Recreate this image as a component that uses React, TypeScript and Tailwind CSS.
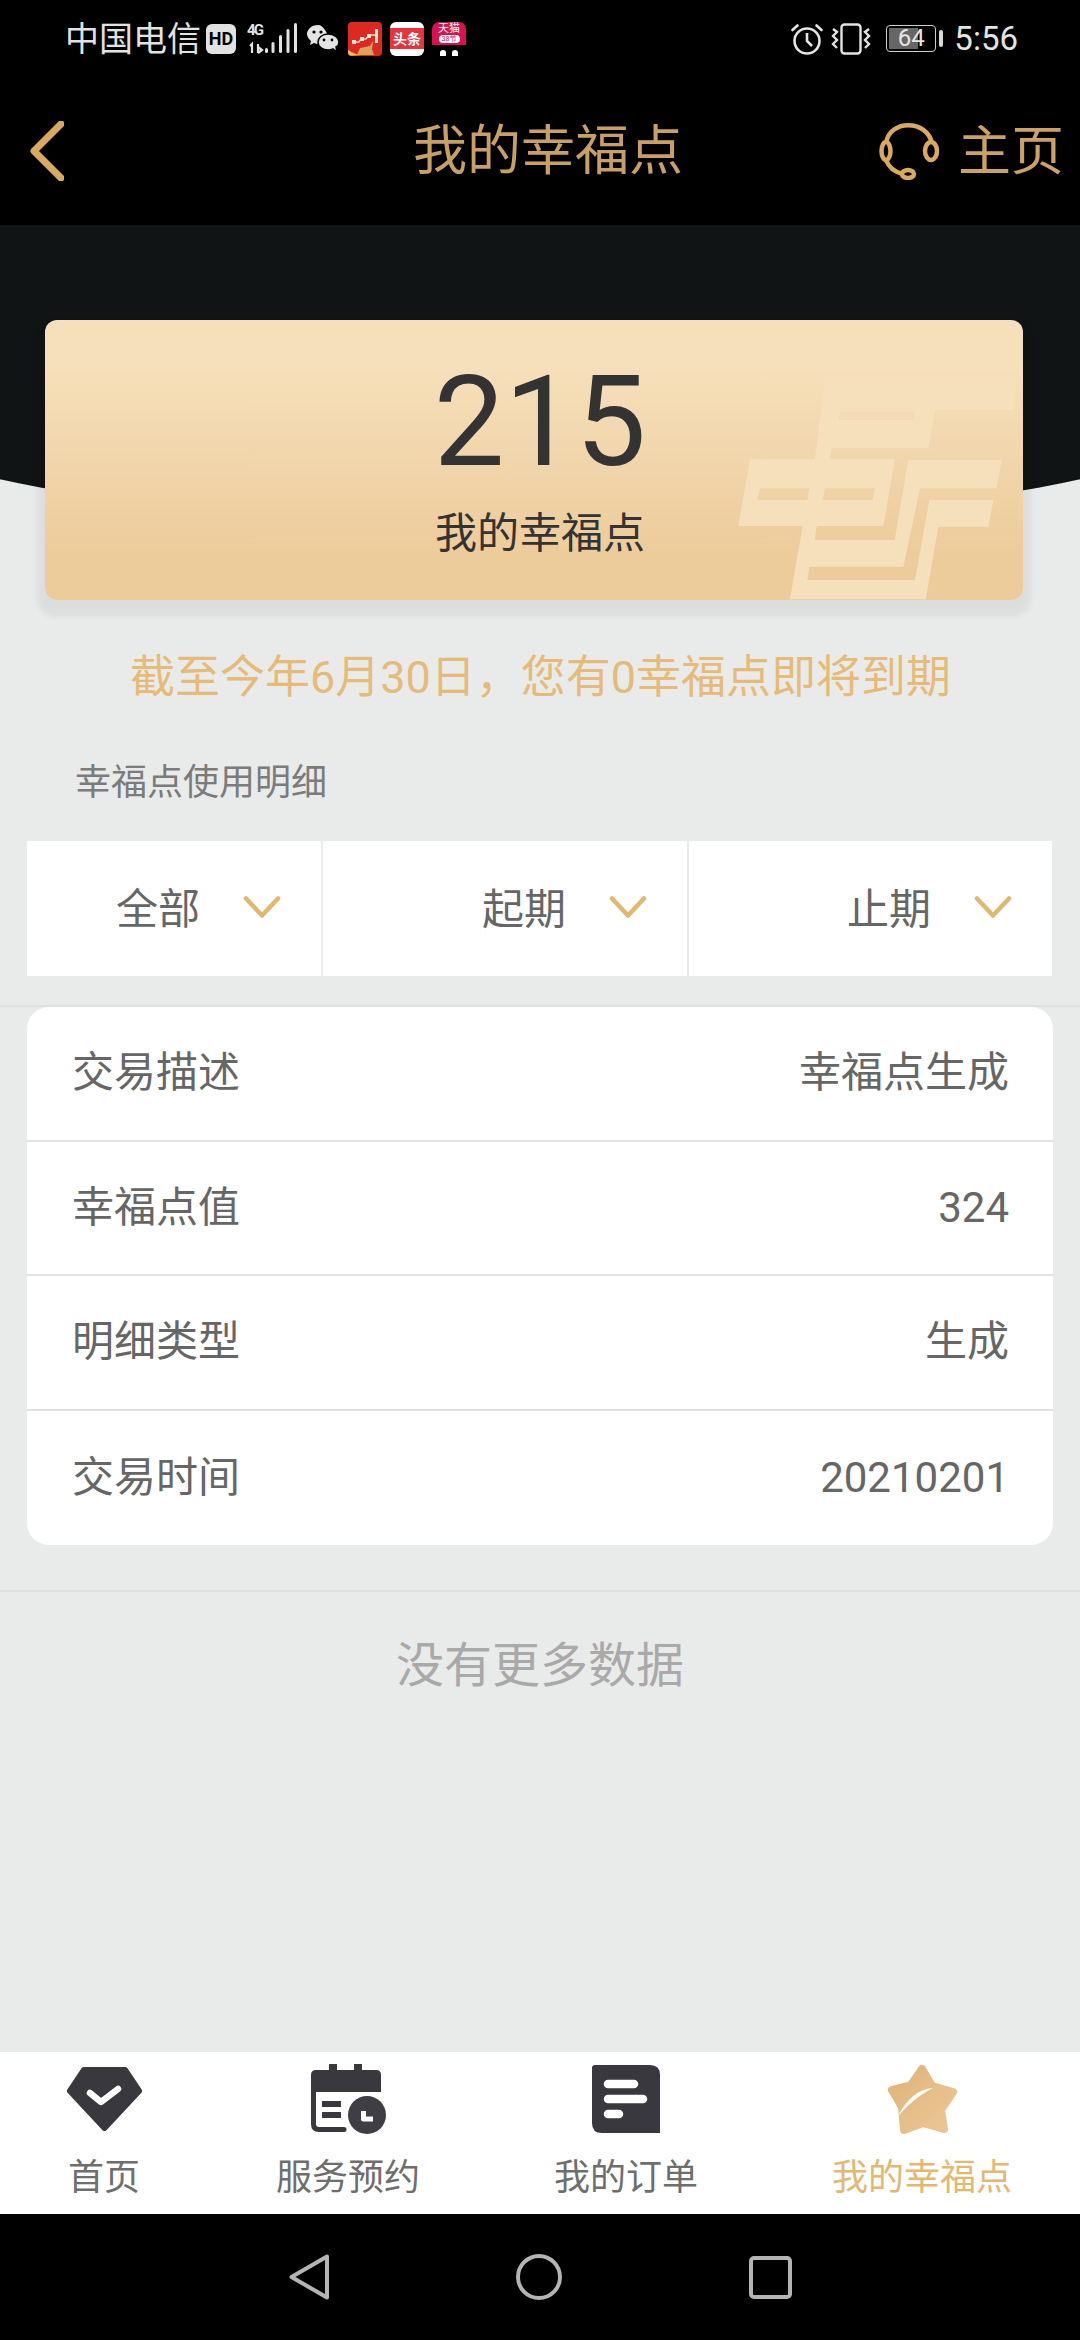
import React from 'react';

const BackIcon = () => (
  <svg width="34" height="60" viewBox="0 0 34 60" fill="none">
    <path d="M31 3 L4 30 L31 57" stroke="#d9aa5e" strokeWidth="7" strokeLinecap="round" strokeLinejoin="round" />
  </svg>
);

const HeadsetIcon = () => (
  <svg width="60" height="58" viewBox="0 0 60 58" fill="none" stroke="#d8a95f" strokeWidth="4.5">
    <path d="M7 22 C9 -3 49 -3 53 22" />
    <ellipse cx="7" cy="29" rx="4.5" ry="9" />
    <ellipse cx="52" cy="29" rx="6" ry="9" />
    <path d="M7 38 C10 46 15 50 24 52" />
    <ellipse cx="29" cy="52" rx="6" ry="4" />
  </svg>
);

const SignalIcon = () => (
  <svg width="52" height="34" viewBox="0 0 52 34">
    <text x="0" y="13" fontSize="15" fontWeight="700" fill="#e2e2e2" fontFamily="Roboto, sans-serif" textLength="17">4G</text>
    <path d="M3 24 L5 22 V31 M11 22 V31 M11 25 L15 28 L11 31" stroke="#e2e2e2" strokeWidth="2.2" fill="none" />
    <rect x="18" y="26" width="3" height="5" rx="1.5" fill="#e2e2e2" />
    <rect x="24.5" y="20" width="3" height="11" rx="1.5" fill="#e2e2e2" />
    <rect x="32" y="13" width="3" height="18" rx="1.5" fill="#e2e2e2" />
    <rect x="39.5" y="7" width="3" height="24" rx="1.5" fill="#e2e2e2" />
    <rect x="47" y="1" width="3" height="30" rx="1.5" fill="#e2e2e2" />
  </svg>
);

const WechatIcon = () => (
  <svg width="32" height="30" viewBox="0 0 32 30">
    <path d="M11 1 C4 1 0 6 0 10 C0 13 2 15 4 17 L3 21 L7 19 C9 20 11 20 13 20 C21 20 22 10 18 6 C16 3 14 1 11 1Z" fill="#e4e4e4" />
    <path d="M21 10 C15 10 11 14 11 18 C11 23 16 26 21 26 C23 26 24 26 26 25 L30 28 L29 23 C31 22 32 20 32 18 C32 14 27 10 21 10Z" fill="#e4e4e4" stroke="#000" strokeWidth="1.5" />
    <circle cx="7" cy="8" r="1.6" fill="#000" />
    <circle cx="14" cy="8" r="1.6" fill="#000" />
    <circle cx="17" cy="16" r="1.4" fill="#000" />
    <circle cx="25" cy="16" r="1.4" fill="#000" />
  </svg>
);

const StockAppIcon = () => (
  <div className="w-[34px] h-[34px] rounded-[4px] bg-[#dc2a22] overflow-hidden">
    <svg width="34" height="34" viewBox="0 0 34 34">
      <path d="M5 20 H11 L13 17 H18 L21 13 H27" stroke="#f5d9c0" strokeWidth="1.4" fill="none" />
      <rect x="4" y="18" width="4" height="4" fill="#fbe4d0" />
      <rect x="12" y="15" width="4" height="4" fill="#fbe4d0" />
      <rect x="19" y="12" width="4" height="4" fill="#fbe4d0" />
      <rect x="27" y="7" width="3" height="14" fill="#fbe4d0" />
      <path d="M9 33 L12 26 L22 24 L25 19 L24 27 L26 33Z" fill="#d9a45c" />
      <path d="M0 28 Q8 33 13 33 L0 34Z" fill="#f0c04a" />
    </svg>
  </div>
);

const ToutiaoIcon = () => (
  <div className="w-[34px] h-[34px] rounded-[6px] bg-white flex flex-col justify-center overflow-hidden">
    <div className="h-[21px] bg-[#e8323c] flex items-center justify-center text-white text-[14px] leading-none font-bold whitespace-nowrap">头条</div>
  </div>
);

const TmallIcon = () => (
  <div className="w-[34px] h-[34px] relative overflow-hidden">
    <div className="h-[23px] rounded-t-[7px] bg-[#d9124f] flex flex-col items-center">
      <span className="text-[11px] leading-[13px] text-white whitespace-nowrap">天猫</span>
      <span className="h-[8px] w-[21px] rounded-full bg-white text-[#d9124f] text-[7px] leading-[8px] text-center">38节</span>
    </div>
    <div className="flex justify-center gap-[6px] mt-[5px]">
      <span className="w-[6px] h-[6px] rounded-t-full bg-white" />
      <span className="w-[6px] h-[6px] rounded-t-full bg-white" />
    </div>
  </div>
);

const AlarmIcon = () => (
  <svg width="32" height="32" viewBox="0 0 32 32" fill="none" stroke="#e4e4e4" strokeWidth="2.6">
    <circle cx="16" cy="18" r="12.5" />
    <path d="M16 10 V18 L21 23" />
    <path d="M1.5 7 L6.5 2.5 M30.5 7 L25.5 2.5" strokeLinecap="round" />
  </svg>
);

const VibrateIcon = () => (
  <svg width="40" height="32" viewBox="0 0 40 32" fill="none" stroke="#e4e4e4" strokeWidth="2.4">
    <rect x="10.5" y="1.5" width="19" height="29" rx="3" />
    <path d="M2 6 L6 9 L2 13 L6 17 L2 21 L6 25" />
    <path d="M38 6 L34 9 L38 13 L34 17 L38 21 L34 25" />
  </svg>
);

const DiamondIcon = () => (
  <svg width="75" height="64" viewBox="0 0 75 64">
    <path d="M17 3 H58 L72 24 L37.5 61 L3 24Z" fill="#38383e" stroke="#38383e" strokeWidth="6" strokeLinejoin="round" />
    <path d="M23 26 L34 35 L51 22" fill="none" stroke="#fff" strokeWidth="6.5" strokeLinecap="round" strokeLinejoin="round" />
  </svg>
);

const CalendarIcon = () => (
  <svg width="75" height="70" viewBox="0 0 75 70">
    <path d="M18 0 H26 V6 H43 V0 H51 V6 H65 Q70 6 70 11 V28 H0 V11 Q0 6 5 6 H18Z" fill="#38383e" />
    <path d="M2.5 28 V60 Q2.5 65.5 8 65.5 H33" fill="none" stroke="#38383e" strokeWidth="5" strokeLinecap="round" />
    <rect x="11" y="37" width="19" height="6" fill="#38383e" />
    <rect x="11" y="48" width="19" height="6" fill="#38383e" />
    <circle cx="56" cy="51" r="19" fill="#3e3e44" />
    <path d="M52.5 47 V55 H62" fill="none" stroke="#fff" strokeWidth="5" strokeLinejoin="round" />
  </svg>
);

const OrdersIcon = () => (
  <svg width="68" height="68" viewBox="0 0 68 68">
    <path d="M3 0 H58 Q68 0 68 10 V68 H10 Q0 68 0 58 V3 Q0 0 3 0Z" fill="#38383e" />
    <path d="M16 19 H42 M16 34 H51 M16 49 H27" stroke="#fff" strokeWidth="8.5" strokeLinecap="round" />
  </svg>
);

const StarIcon = () => (
  <svg width="71" height="70" viewBox="0 0 71 70">
    <defs>
      <linearGradient id="starFill" x1="0" y1="0" x2="1" y2="1">
        <stop offset="0" stopColor="#dfb478" />
        <stop offset="1" stopColor="#ebc797" />
      </linearGradient>
    </defs>
    <path d="M35 5 L45 22 L66 28 L54 46 L57 65 L36 59 L17 66 L15 43 L5 26 L24 21Z" fill="url(#starFill)" stroke="url(#starFill)" strokeWidth="8" strokeLinejoin="round" />
    <path d="M46 24 C32 25 20 34 11 52 C22 40 32 31 46 24Z" fill="#fff" />
  </svg>
);

const PostLogo = () => (
  <svg className="absolute left-[675px] top-[40px]" width="320" height="250" viewBox="0 0 960 750">
    <g fill="#f6e0bc" fillRule="evenodd">
      <path d="M315 55 H585 L600 50 H890 L880 150 H645 L625 265 H335 L330 298 H285Z M360 155 L355 180 H580 L585 155Z" />
      <path d="M90 298 H525 L490 498 H55Z M120 385 L112 420 H262 L268 385Z M315 385 L308 420 H458 L465 385Z" />
      <path d="M248 498 H290 L284 540 H524 L565 300 H845 L830 385 H600 L550 620 H268 L262 660 H585 L628 420 H820 L805 500 H655 L617 718 H210Z" />
    </g>
  </svg>
);

const Chevron = () => (
  <svg width="38" height="22" viewBox="0 0 38 22" fill="none">
    <path d="M3 2.5 L19 19.5 L35 2.5" stroke="#e2b76f" strokeWidth="4.5" strokeLinecap="round" strokeLinejoin="round" />
  </svg>
);

const filters = [
  { label: '全部', width: 'w-[294px]' },
  { label: '起期', width: 'w-[364px]' },
  { label: '止期', width: 'w-[363px]' },
];

const rows = [
  { label: '交易描述', value: '幸福点生成' },
  { label: '幸福点值', value: '324' },
  { label: '明细类型', value: '生成' },
  { label: '交易时间', value: '20210201' },
];

const tabs = [
  { label: '首页', icon: <DiamondIcon />, active: false },
  { label: '服务预约', icon: <CalendarIcon />, active: false },
  { label: '我的订单', icon: <OrdersIcon />, active: false },
  { label: '我的幸福点', icon: <StarIcon />, active: true },
];

export default function App() {
  return (
    <div className="w-[1080px] h-[2340px] flex flex-col overflow-hidden bg-black font-['Roboto','Noto_Sans_CJK_SC',sans-serif]">
      {/* status bar */}
      <div className="h-[76px] shrink-0 flex items-center pl-[65px] pr-[62px] pt-[1px]">
        <span className="text-[34px] leading-none text-[#e2e2e2] whitespace-nowrap">中国电信</span>
        <span className="ml-[5px] w-[30px] h-[30px] rounded-[6px] bg-[#e2e2e2] text-black text-[18px] leading-[30px] font-bold text-center">HD</span>
        <span className="ml-[11px]"><SignalIcon /></span>
        <span className="ml-[8px]"><WechatIcon /></span>
        <span className="ml-[9px] flex gap-[8px]">
          <StockAppIcon />
          <ToutiaoIcon />
          <TmallIcon />
        </span>
        <div className="ml-auto flex items-center">
          <AlarmIcon />
          <span className="ml-[8px]"><VibrateIcon /></span>
          <div className="ml-[15px] w-[50px] h-[27px] rounded-[4px] border-[1.5px] border-[#cfcfcf] p-[2px] relative">
            <div className="w-[66%] h-full bg-[#666]" />
            <span className="absolute inset-0 text-center text-[24px] leading-[24px] text-[#e6e6e6]">64</span>
          </div>
          <div className="ml-[3px] w-[4px] h-[17px] rounded-[2px] bg-[#d8d8d8]" />
          <span className="ml-[11px] text-[33px] leading-none text-[#e4e4e4]">5:56</span>
        </div>
      </div>

      {/* header */}
      <div className="h-[149px] shrink-0 flex items-center pl-[30px] pr-[16px]">
        <BackIcon />
        <h1 className="ml-[349px] mt-[3px] text-[54px] leading-none font-normal text-[#c9a063] whitespace-nowrap">我的幸福点</h1>
        <div className="ml-auto flex items-center gap-[19px]">
          <HeadsetIcon />
          <span className="mt-[3px] text-[53px] leading-none text-[#cba263] whitespace-nowrap">主页</span>
        </div>
      </div>

      {/* main */}
      <div className="flex-1 relative overflow-hidden bg-[#e9ebea] flex flex-col">
        <div className="absolute left-[-108px] top-0 w-[1296px] h-[298px] bg-[#101415] rounded-b-[50%_98px]" />

        <div className="relative mt-[95px] ml-[45px] mr-[57px] h-[280px] shrink-0 rounded-[12px] bg-[linear-gradient(180deg,#f6e0bc_14%,#edcc9c_82%)] shadow-[0_9px_6px_8px_rgba(0,0,0,0.055)]">
          <div className="absolute inset-0 rounded-[12px] overflow-hidden">
            <PostLogo />
          </div>
          <div className="relative flex flex-col items-center pt-[32px] pl-[12px]">
            <span className="text-[126px] leading-[140px] text-[#333]">215</span>
            <span className="text-[42px] leading-[50px] text-[#333] mt-[17px]">我的幸福点</span>
          </div>
        </div>

        <p className="relative mt-[48px] text-center text-[45px] leading-[60px] text-[#e6bb78] ml-[1px] whitespace-nowrap">截至今年6月30日，您有0幸福点即将到期</p>

        <p className="relative mt-[50px] ml-[75px] text-[36px] leading-[50px] text-[#7b7b7b]">幸福点使用明细</p>

        <div className="relative mt-[33px] mx-[27px] h-[135px] shrink-0 flex gap-[2px]">
          {filters.map(item => (
            <div key={item.label} className={`${item.width} h-full bg-white flex items-center justify-end gap-[43px] pr-[40px]`}>
              <span className="mt-[3px] text-[42px] leading-none text-[#666]">{item.label}</span>
              <span className="mb-[4px]"><Chevron /></span>
            </div>
          ))}
        </div>

        <div className="relative mt-[29px] border-t-2 border-[#dfe1e0]">
          <div className="mx-[27px] bg-white rounded-[22px] overflow-hidden">
            {rows.map((row, i) => (
              <div key={row.label} className={`h-[134.5px] flex items-center justify-between pl-[45px] pr-[44px] ${i < rows.length - 1 ? 'border-b-2 border-[#e1e1e1]' : ''}`}>
                <span className="text-[42px] leading-none text-[#666]">{row.label}</span>
                <span className="text-[42px] leading-none text-[#666]">{row.value}</span>
              </div>
            ))}
          </div>
        </div>

        <div className="relative mt-[45px] border-t-2 border-[#dfe1e0] pt-[44px] text-center text-[48px] leading-[60px] text-[#a9a9a9]">
          没有更多数据
        </div>
      </div>

      {/* tab bar */}
      <div className="h-[162px] shrink-0 bg-white grid grid-cols-[208px_280px_276px_316px]">
        {tabs.map(tab => (
          <div key={tab.label} className="flex flex-col items-center pt-[11px]">
            <div className="h-[72px] flex items-center justify-center">{tab.icon}</div>
            <span className={`mt-[21px] text-[36px] leading-[44px] whitespace-nowrap ${tab.active ? 'text-[#e3b873]' : 'text-[#6e6e6e]'}`}>{tab.label}</span>
          </div>
        ))}
      </div>

      {/* system nav */}
      <div className="h-[126px] shrink-0 bg-black flex items-center justify-center gap-[187px]">
        <svg width="40" height="46" viewBox="0 0 40 46" fill="none">
          <path d="M38 2.5 V43.5 L2.5 23Z" stroke="#b4b4b4" strokeWidth="4" strokeLinejoin="round" />
        </svg>
        <svg width="46" height="46" viewBox="0 0 46 46" fill="none">
          <circle cx="23" cy="23" r="21" stroke="#b4b4b4" strokeWidth="4" />
        </svg>
        <svg width="43" height="43" viewBox="0 0 43 43" fill="none">
          <rect x="2" y="2" width="39" height="39" rx="3" stroke="#b4b4b4" strokeWidth="4" />
        </svg>
      </div>
    </div>
  );
}
